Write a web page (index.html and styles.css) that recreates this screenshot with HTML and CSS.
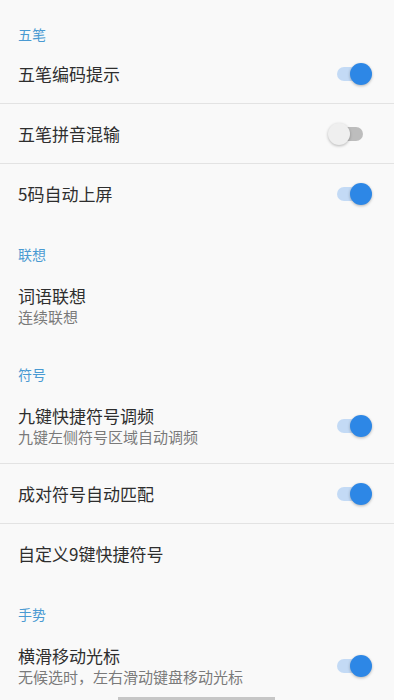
FILE: index.html
```html
<!DOCTYPE html>
<html lang="zh">
<head>
<meta charset="utf-8">
<title>设置</title>
<link rel="stylesheet" href="styles.css">
</head>
<body>
<main class="page">
  <section class="group">
    <h2 class="group-title first">五笔</h2>
    <div class="row divided">
      <div class="texts"><div class="title">五笔编码提示</div></div>
      <span class="switch on"><span class="track"></span><span class="thumb"></span></span>
    </div>
    <div class="row divided">
      <div class="texts"><div class="title">五笔拼音混输</div></div>
      <span class="switch off"><span class="track"></span><span class="thumb"></span></span>
    </div>
    <div class="row">
      <div class="texts"><div class="title">5码自动上屏</div></div>
      <span class="switch on"><span class="track"></span><span class="thumb"></span></span>
    </div>
  </section>

  <section class="group">
    <h2 class="group-title">联想</h2>
    <div class="row tall">
      <div class="texts"><div class="title">词语联想</div><div class="summary">连续联想</div></div>
    </div>
  </section>

  <section class="group">
    <h2 class="group-title">符号</h2>
    <div class="row tall divided">
      <div class="texts"><div class="title">九键快捷符号调频</div><div class="summary">九键左侧符号区域自动调频</div></div>
      <span class="switch on"><span class="track"></span><span class="thumb"></span></span>
    </div>
    <div class="row divided">
      <div class="texts"><div class="title">成对符号自动匹配</div></div>
      <span class="switch on"><span class="track"></span><span class="thumb"></span></span>
    </div>
    <div class="row">
      <div class="texts"><div class="title">自定义9键快捷符号</div></div>
    </div>
  </section>

  <section class="group">
    <h2 class="group-title">手势</h2>
    <div class="row tall">
      <div class="texts"><div class="title">横滑移动光标</div><div class="summary">无候选时，左右滑动键盘移动光标</div></div>
      <span class="switch on"><span class="track"></span><span class="thumb"></span></span>
    </div>
  </section>
</main>
<div class="home-bar"></div>
</body>
</html>
```

FILE: styles.css
```css
html, body {
  margin: 0;
  padding: 0;
  height: 700px;
  overflow: hidden;
  background: #f9f9f9;
}

body {
  font-family: "Noto Sans CJK SC", "Roboto", "Noto Sans", sans-serif;
  color: #2e2e2e;
}

.page {
  display: flex;
  flex-direction: column;
}

.group {
  display: flex;
  flex-direction: column;
}

.group-title {
  margin: 0;
  height: 44px;
  box-sizing: border-box;
  padding: 20px 18px 4px;
  font-size: 14px;
  line-height: 20px;
  font-weight: 400;
  color: #4a9ad2;
}

.group-title.first {
  padding-top: 24px;
  padding-bottom: 0;
}

.row {
  height: 60px;
  box-sizing: border-box;
  padding: 0 21px 0 18px;
  display: flex;
  align-items: center;
  justify-content: space-between;
}

.row.tall {
  height: 76px;
}

.row.divided {
  border-bottom: 1px solid #e3e3e3;
}

.texts {
  display: flex;
  flex-direction: column;
}

.title {
  font-size: 17px;
  line-height: 22px;
  color: #2e2e2e;
}

.summary {
  font-size: 15px;
  line-height: 20px;
  color: #7a7a7a;
}

.switch {
  position: relative;
  width: 46px;
  height: 24px;
  flex: none;
}

.switch .track {
  position: absolute;
  left: 10px;
  right: 10px;
  top: 5px;
  height: 14px;
  border-radius: 7px;
}

.switch .thumb {
  position: absolute;
  top: 1px;
  width: 22px;
  height: 22px;
  border-radius: 50%;
  box-shadow: 0 1px 3px rgba(0, 0, 0, 0.28);
}

.switch.on .track {
  background: #c3daf5;
}

.switch.on .thumb {
  left: 23px;
  background: #2d87e6;
}

.switch.off .track {
  background: #bdbdbd;
}

.switch.off .thumb {
  left: 1px;
  background: #efefef;
}

.home-bar {
  position: fixed;
  left: 118px;
  width: 157px;
  bottom: 0;
  height: 3px;
  background: #c6c6c6;
}
```
